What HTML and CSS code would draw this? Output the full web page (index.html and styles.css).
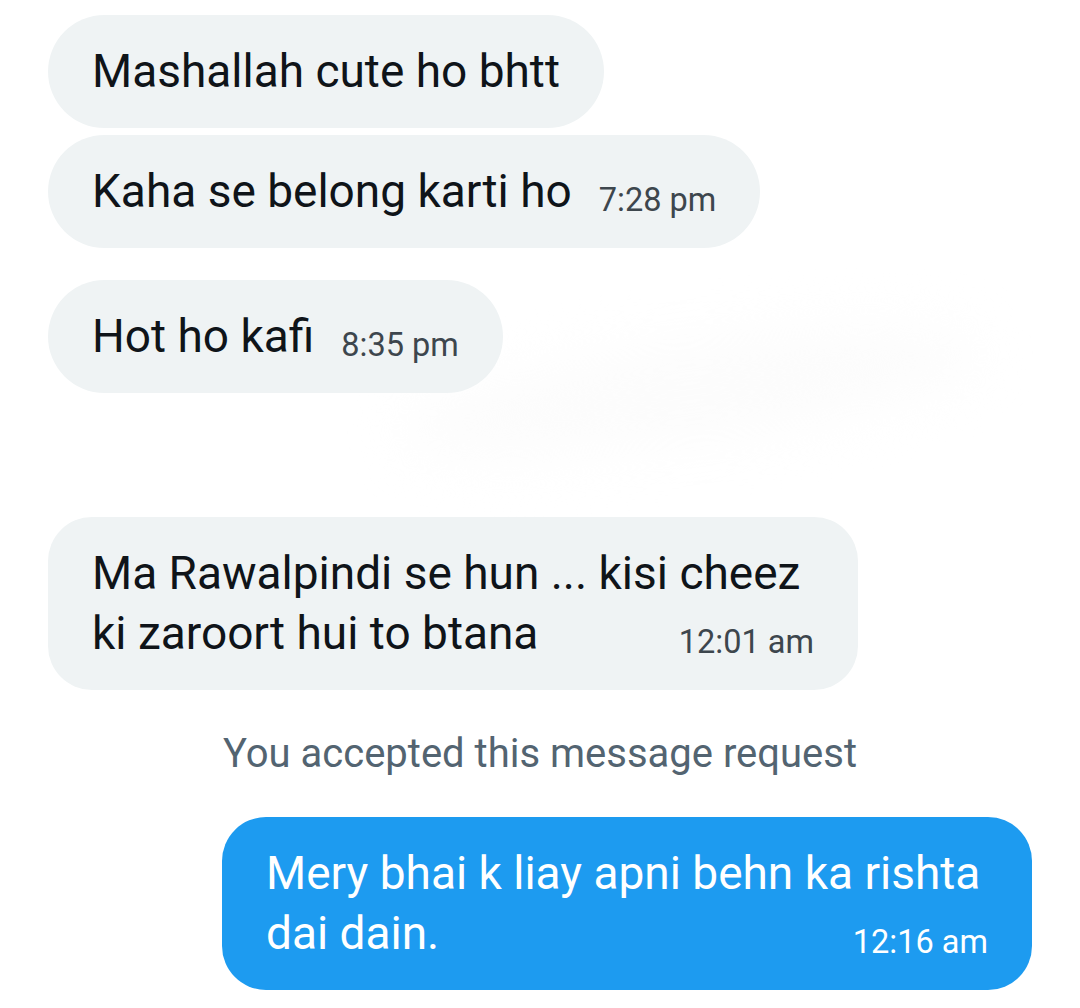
FILE: index.html
```html
<!DOCTYPE html>
<html lang="en">
<head>
<meta charset="utf-8">
<title>Messages</title>
<link rel="stylesheet" href="styles.css">
</head>
<body>
<main class="thread">
  <div class="smudge" aria-hidden="true"></div>
  <div class="row in"><div class="bubble"><span class="text">Mashallah cute ho bhtt</span></div></div>
  <div class="row in tight"><div class="bubble"><span class="text">Kaha se belong karti ho</span><span class="time">7:28 pm</span></div></div>
  <div class="row in group"><div class="bubble"><span class="text">Hot ho kafi</span><span class="time">8:35 pm</span></div></div>
  <div class="row in far">
    <div class="bubble multi">
      <span class="line">Ma Rawalpindi se hun ... kisi cheez</span>
      <span class="last"><span class="text">ki zaroort hui to btana</span><span class="time">12:01 am</span></span>
    </div>
  </div>
  <p class="notice">You accepted this message request</p>
  <div class="row out">
    <div class="bubble multi">
      <span class="line">Mery bhai k liay apni behn ka rishta</span>
      <span class="last"><span class="text">dai dain.</span><span class="time">12:16 am</span></span>
    </div>
  </div>
</main>
</body>
</html>
```

FILE: styles.css
```css
html, body {
  margin: 0;
  padding: 0;
  background: #ffffff;
}

body {
  font-family: Roboto, "Liberation Sans", Arial, sans-serif;
  color: #0f1419;
}

.thread {
  position: relative;
  display: flex;
  flex-direction: column;
  padding: 15px 48px 0 48px;
  width: 1080px;
  box-sizing: border-box;
}

.smudge {
  position: absolute;
  left: 400px;
  top: 345px;
  width: 580px;
  height: 95px;
  border-radius: 50%;
  background: #fcfcfc;
  filter: blur(26px);
  transform: rotate(-8deg);
}

.row {
  position: relative;
  display: flex;
}

.row.in { justify-content: flex-start; }
.row.out { justify-content: flex-end; }

.row.tight { margin-top: 7px; }
.row.group { margin-top: 32px; }
.row.far { margin-top: 124px; }

.bubble {
  display: flex;
  align-items: flex-start;
  gap: 27px;
  max-width: 810px;
  box-sizing: border-box;
  padding: 26px 44px 27px 44px;
  border-radius: 57px;
  background: #eff3f4;
  font-size: 46px;
  line-height: 60px;
  font-weight: 400;
  color: #0f1419;
}

.bubble.multi {
  display: block;
  width: 810px;
  border-radius: 44px;
}

.line {
  display: block;
  white-space: nowrap;
}

.last {
  display: flex;
  align-items: flex-start;
  justify-content: space-between;
  gap: 25px;
}

.text {
  white-space: nowrap;
}

.out .bubble {
  background: #1d9bf0;
  color: #ffffff;
}

.time {
  flex: none;
  margin-top: 18px;
  font-size: 32.5px;
  line-height: 42px;
  color: #3d464d;
  white-space: nowrap;
}

.out .time {
  color: #ffffff;
}

.notice {
  margin: 40px 0 39px 0;
  text-align: center;
  font-size: 40px;
  line-height: 48px;
  color: #536471;
}
```
